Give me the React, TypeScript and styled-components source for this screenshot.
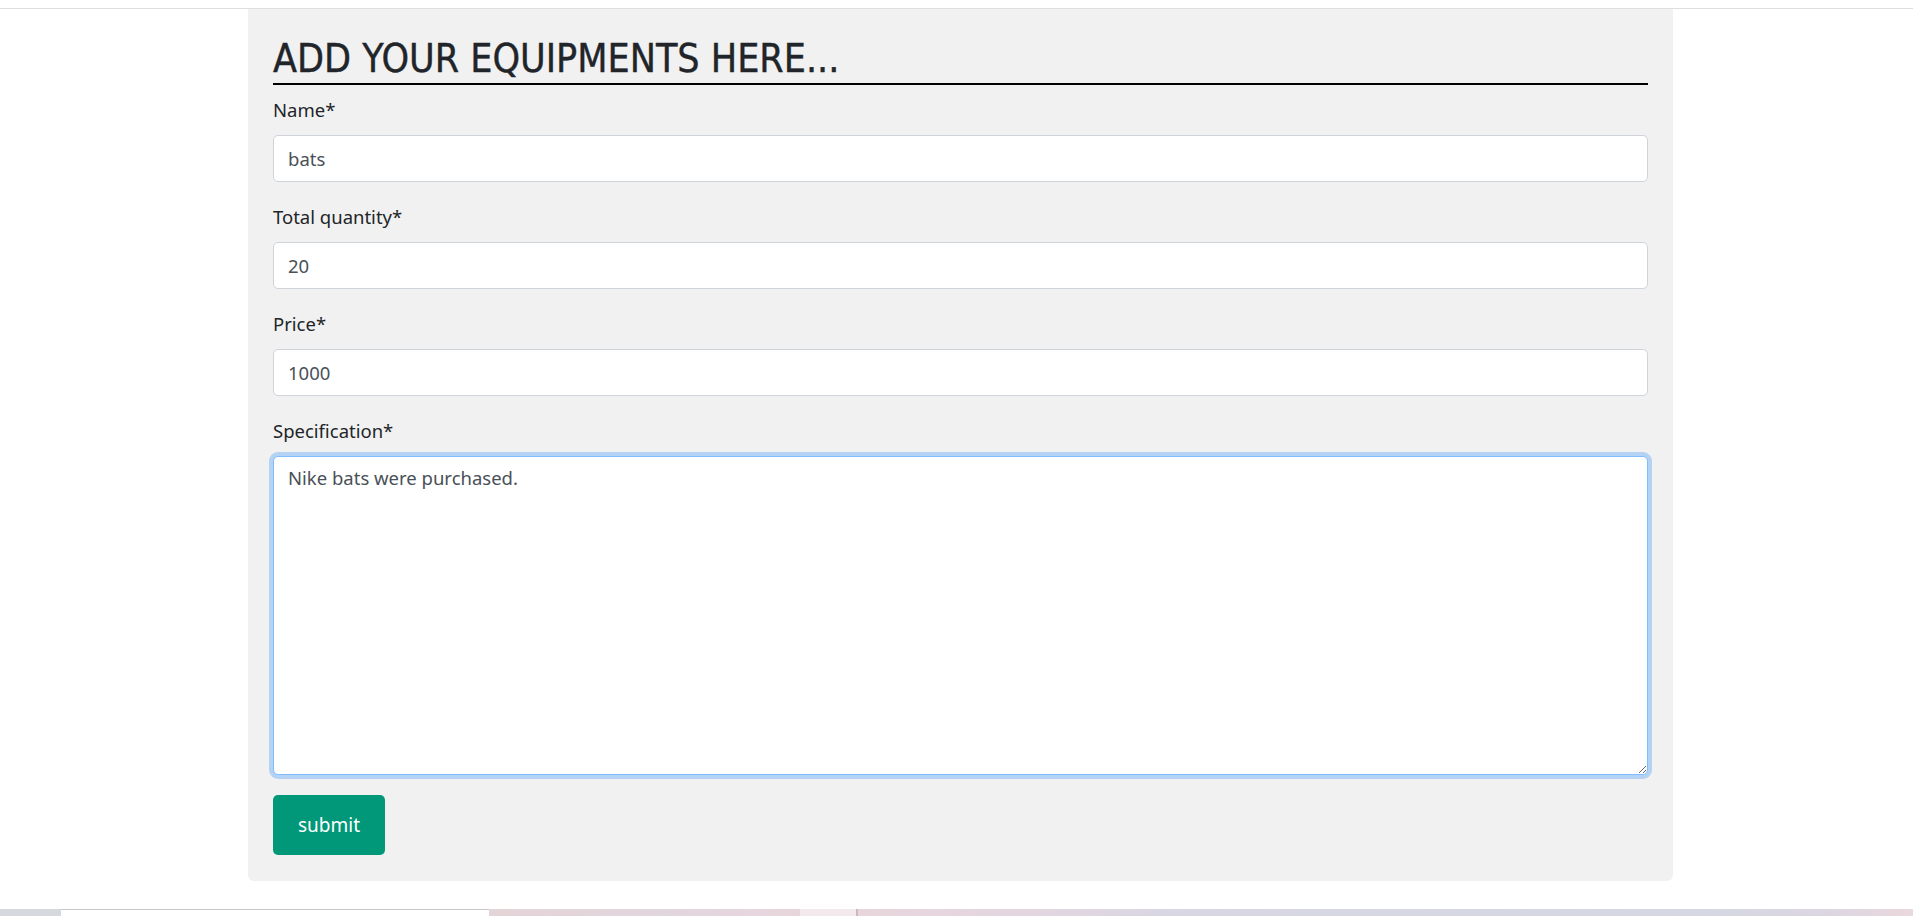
import { useEffect, useRef, useState } from 'react';
import styled, { createGlobalStyle } from 'styled-components';

const GlobalStyle = createGlobalStyle`
    html, body {
        margin: 0;
        padding: 0;
        background: #fff;
        font-family: "Noto Sans", "Open Sans", sans-serif;
        overflow: hidden;
    }
    * {
        box-sizing: border-box;
    }
`;

const TopRule = styled.div`
    height: 9px;
    border-bottom: 1px solid #dedede;
`;
const Page = styled.div`
    padding-left: 248px;
`;
const Card = styled.div`
    width: 1425px;
    background-color: #f1f1f1;
    border-radius: 0 0 6px 6px;
    padding: 26px 25px 26px;
`;
const Title = styled.h1`
    margin: 0;
    font-family: "Liberation Sans Narrow", "DejaVu Sans Condensed", "Liberation Sans", sans-serif;
    font-weight: 400;
    font-size: 39px;
    line-height: 48px;
    color: #212529;
    border-bottom: 2px solid #000;
    -webkit-text-stroke: 0.4px #212529;
`;
const Form = styled.form`
    display: flex;
    flex-direction: column;
    margin-top: 10px;
`;
const Group = styled.div`
    display: flex;
    flex-direction: column;
    margin-bottom: 20px;
`;
const Label = styled.label`
    font-size: 18.5px;
    line-height: 30px;
    color: #212529;
    margin-bottom: 10px;
`;
const Input = styled.input`
    width: 100%;
    height: 47px;
    padding: 7px 14px;
    font-family: inherit;
    font-size: 18.5px;
    color: #495057;
    background: #fff;
    border: 1px solid #ced4da;
    border-radius: 5px;
    outline: none;
`;
const TextArea = styled.textarea<{ $focused?: boolean }>`
    width: 100%;
    height: 319px;
    padding: 7px 14px;
    font-family: inherit;
    font-size: 18.5px;
    line-height: 28px;
    color: #495057;
    background: #fff;
    border: 1px solid ${p => (p.$focused ? '#80bdff' : '#ced4da')};
    border-radius: 5px;
    outline: none;
    box-shadow: ${p => (p.$focused ? '0 0 0 4px rgba(0, 123, 255, 0.25)' : 'none')};
    caret-color: #222;
`;
const SubmitButton = styled.button`
    align-self: flex-start;
    min-width: 110px;
    padding: 15px 25px;
    font-family: inherit;
    font-size: 19px;
    line-height: 30px;
    color: #fff;
    background-color: #009879;
    border: none;
    border-radius: 5px;
    cursor: pointer;
`;
const Footer = styled.div`
    display: flex;
    height: 7px;
    margin-top: 28px;
`;
const Strip = styled.div<{ $w?: number; $bg: string; $line?: boolean }>`
    flex: ${p => (p.$w ? `0 0 ${p.$w}px` : '1')};
    background: ${p => p.$bg};
    border-top: ${p => (p.$line ? '1px solid #c6c6c6' : 'none')};
`;

function App() {
    const [name, setName] = useState('bats');
    const [qty, setQty] = useState('20');
    const [price, setPrice] = useState('1000');
    const [spec, setSpec] = useState('Nike bats were purchased.');
    const specRef = useRef<HTMLTextAreaElement>(null);

    useEffect(() => {
        const el = specRef.current;
        if (el) {
            el.focus();
            el.setSelectionRange(4, 4);
        }
    }, []);

    return (
        <>
            <GlobalStyle />
            <TopRule />
            <Page>
                <Card>
                    <Title>ADD YOUR EQUIPMENTS HERE...</Title>
                    <Form onSubmit={e => e.preventDefault()}>
                        <Group>
                            <Label>Name*</Label>
                            <Input value={name} onChange={e => setName(e.target.value)} />
                        </Group>
                        <Group>
                            <Label>Total quantity*</Label>
                            <Input value={qty} onChange={e => setQty(e.target.value)} />
                        </Group>
                        <Group>
                            <Label>Price*</Label>
                            <Input value={price} onChange={e => setPrice(e.target.value)} />
                        </Group>
                        <Group>
                            <Label>Specification*</Label>
                            <TextArea ref={specRef} $focused value={spec} onChange={e => setSpec(e.target.value)} />
                        </Group>
                        <SubmitButton type="submit">submit</SubmitButton>
                    </Form>
                </Card>
            </Page>
            <Footer>
                <Strip $w={61} $bg="#d5d9de" />
                <Strip $w={428} $bg="#fff" $line />
                <Strip $w={311} $bg="linear-gradient(90deg, #e3d4d7, #e2d6de 60%, #e8d5dc)" />
                <Strip $w={56} $bg="#f4e9ed" />
                <Strip $w={2} $bg="#c9b8be" />
                <Strip $bg="linear-gradient(90deg, #e8d5dc, #e2d6e0 18%, #d8d7e3 30%, #d5d8e2 80%, #dcd6e2 92%, #ead8dc)" />
            </Footer>
        </>
    );
}

export default App;
